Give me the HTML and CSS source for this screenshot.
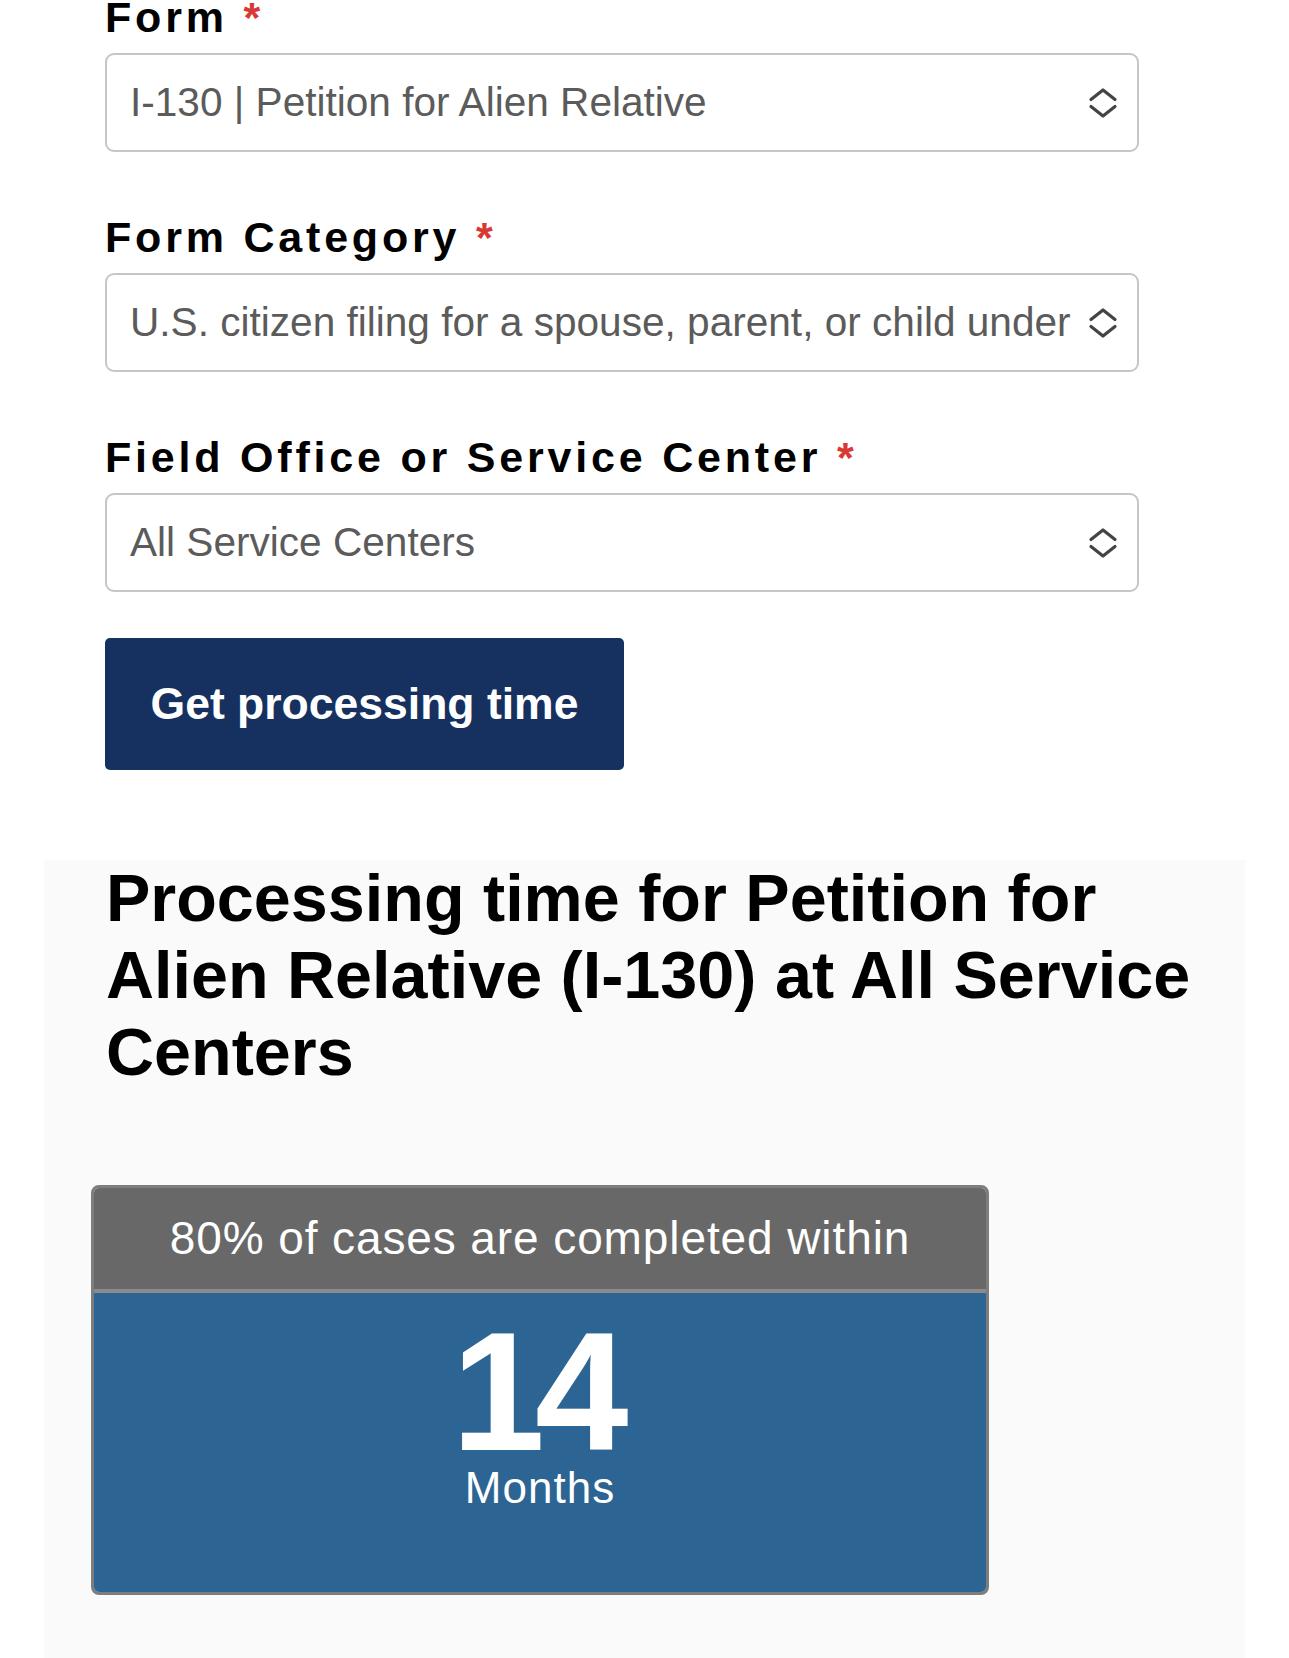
FILE: index.html
```html
<!DOCTYPE html>
<html lang="en">
<head>
<meta charset="utf-8">
<title>Processing time</title>
<link rel="stylesheet" href="styles.css">
</head>
<body>
<main class="page">
  <div class="form">
    <div class="field">
      <label class="label">Form <span class="req">*</span></label>
      <div class="select">
        <span class="select-value">I-130 | Petition for Alien Relative</span>
        <svg class="chev" width="30" height="32" viewBox="0 0 30 32" aria-hidden="true"><path d="M3 12.5 L15 3 L27 12.5 M3 19.5 L15 29 L27 19.5" fill="none" stroke="#444" stroke-width="3.2" stroke-linecap="round" stroke-linejoin="round"/></svg>
      </div>
    </div>
    <div class="field">
      <label class="label">Form Category <span class="req">*</span></label>
      <div class="select">
        <span class="select-value">U.S. citizen filing for a spouse, parent, or child under 21</span>
        <svg class="chev" width="30" height="32" viewBox="0 0 30 32" aria-hidden="true"><path d="M3 12.5 L15 3 L27 12.5 M3 19.5 L15 29 L27 19.5" fill="none" stroke="#444" stroke-width="3.2" stroke-linecap="round" stroke-linejoin="round"/></svg>
      </div>
    </div>
    <div class="field">
      <label class="label">Field Office or Service Center <span class="req">*</span></label>
      <div class="select">
        <span class="select-value">All Service Centers</span>
        <svg class="chev" width="30" height="32" viewBox="0 0 30 32" aria-hidden="true"><path d="M3 12.5 L15 3 L27 12.5 M3 19.5 L15 29 L27 19.5" fill="none" stroke="#444" stroke-width="3.2" stroke-linecap="round" stroke-linejoin="round"/></svg>
      </div>
    </div>
    <button class="btn" type="button">Get processing time</button>
  </div>

  <section class="result">
    <h2 class="result-title">Processing time for Petition for Alien Relative (I-130) at All Service Centers</h2>
    <div class="card">
      <div class="card-head">80% of cases are completed within</div>
      <div class="card-body">
        <div class="num">14</div>
        <div class="unit">Months</div>
      </div>
    </div>
  </section>
</main>
</body>
</html>
```

FILE: styles.css
```css
* {
  box-sizing: border-box;
}

html, body {
  margin: 0;
  padding: 0;
  background: #ffffff;
}

body {
  font-family: "Liberation Sans", Arial, sans-serif;
  color: #000;
}

.form {
  margin-top: -3px;
  padding-left: 105px;
}

.field {
  width: 1034px;
}

.field + .field {
  margin-top: 65px;
}

.label {
  display: block;
  font-size: 43px;
  font-weight: 700;
  line-height: 40px;
  letter-spacing: 3.8px;
  margin-bottom: 16px;
  color: #000;
}

.req {
  color: #d83933;
  letter-spacing: 0;
}

.select {
  display: flex;
  align-items: center;
  gap: 17px;
  height: 99px;
  padding: 0 19px 0 23px;
  border: 2px solid #c6c6c6;
  border-radius: 9px;
  background: #fff;
}

.select-value {
  flex: 1;
  min-width: 0;
  overflow: hidden;
  white-space: nowrap;
  font-size: 40.6px;
  color: #5b5b5b;
}

.chev {
  flex: none;
  display: block;
}

.btn {
  display: block;
  margin-top: 46px;
  width: 519px;
  height: 132px;
  padding: 0;
  border: none;
  border-radius: 5px;
  background: #16305f;
  color: #fff;
  font-family: "Liberation Sans", Arial, sans-serif;
  font-size: 44.5px;
  font-weight: 700;
}

.result {
  margin: 90px 0 0 44px;
  width: 1201px;
  background: #fafafa;
  padding: 0 0 80px 47px;
}

.result-title {
  margin: 0;
  padding-left: 15px;
  max-width: 1125px;
  font-size: 66.5px;
  font-weight: 700;
  line-height: 77px;
  color: #000;
}

.card {
  margin-top: 94px;
  width: 898px;
  border: 3px solid #7d7d7d;
  border-radius: 8px;
  overflow: hidden;
}

.card-head {
  height: 105px;
  line-height: 101px;
  border-bottom: 4px solid #8b8b8b;
  background: #686868;
  color: #fff;
  text-align: center;
  font-size: 46px;
  letter-spacing: 0.9px;
}

.card-body {
  height: 299px;
  padding-top: 37px;
  background: #2c6494;
  color: #fff;
  text-align: center;
}

.num {
  font-size: 168px;
  font-weight: 700;
  line-height: 124px;
  letter-spacing: -10px;
  text-indent: -10px;
}

.unit {
  margin-top: 14px;
  font-size: 44px;
  line-height: 40px;
  letter-spacing: 1px;
}
```
